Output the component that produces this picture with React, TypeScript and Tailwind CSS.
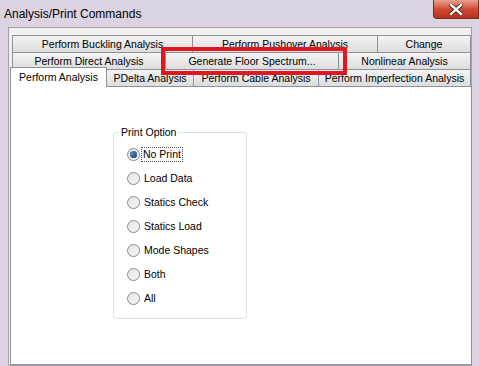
import React from "react";

const font = { fontFamily: '"Liberation Sans", Arial, sans-serif' };

function Tab({ label, w }: { label: string; w: string }) {
  return (
    <div
      className={`${w} h-[18px] shrink-0 flex items-center justify-center border border-[#8e9199] -ml-px first:ml-0 bg-gradient-to-b from-[#f4f4f4] to-[#dddddd] text-[10.5px] text-black leading-none whitespace-nowrap overflow-hidden`}
    >
      {label}
    </div>
  );
}

function Radio({ label, checked }: { label: string; checked?: boolean }) {
  return (
    <div className="h-[24px] flex items-center">
      <div className="w-[13px] h-[13px] rounded-full border border-[#8a8a8a] bg-gradient-to-br from-[#e4e4e4] to-[#f8f8f8] flex items-center justify-center shrink-0">
        {checked && (
          <div className="w-[7px] h-[7px] rounded-full bg-gradient-to-br from-[#6aa6dc] to-[#0d3f7a] shadow-[inset_0_0_1px_#002a60]" />
        )}
      </div>
      <span
        className={`ml-[2px] px-[1px] text-[10.5px] leading-[13px] text-black ${checked ? "outline outline-1 outline-dotted outline-[#555]" : "border border-transparent"}`}
      >
        {label}
      </span>
    </div>
  );
}

export default function App() {
  return (
    <div className="w-[479px] h-[366px] overflow-hidden bg-[#dcd3e2] flex flex-col" style={font}>
      {/* title bar */}
      <div className="h-[27px] shrink-0 flex items-start justify-between">
        <div className="pl-[4px] pt-[7px] text-[12px] leading-[14px] text-black">Analysis/Print Commands</div>
        <div className="w-[46px] h-[19px] rounded-bl-[4px] border border-t-0 border-[#7a2a22] bg-gradient-to-b from-[#e9a190] via-[#cf4a34] to-[#b8301c] flex items-center justify-center">
          <svg width="14" height="11" viewBox="0 0 14 11">
            <path d="M2 1 L12 10 M12 1 L2 10" stroke="#3d1510" strokeWidth="4" strokeLinecap="square" />
            <path d="M2 1 L12 10 M12 1 L2 10" stroke="#ffffff" strokeWidth="2.4" strokeLinecap="square" />
          </svg>
        </div>
      </div>

      {/* dialog body */}
      <div className="relative flex-1 ml-[8px] mr-[7px] border border-[#a3a1a8] bg-[#f0f0f0] pt-[7px] pl-[1px] flex flex-col">
        <div className="flex pl-[2px]">
          <Tab label="Perform Buckling Analysis" w="w-[181px]" />
          <Tab label="Perform Pushover Analysis" w="w-[186px]" />
          <Tab label="Change" w="w-[94px]" />
        </div>
        <div className="flex pl-[2px] -mt-px">
          <Tab label="Perform Direct Analysis" w="w-[154px]" />
          <Tab label="Generate Floor Spectrum..." w="w-[174px]" />
          <Tab label="Nonlinear Analysis" w="w-[133px]" />
        </div>
        <div className="flex items-end -mt-[3px] relative z-10">
          <div className="w-[97px] h-[20px] shrink-0 flex items-start justify-center pt-[4px] border border-b-0 border-[#8e9199] bg-white text-[10.5px] leading-none">
            Perform Analysis
          </div>
          <div className="flex -ml-px">
            <Tab label="PDelta Analysis" w="w-[88px]" />
            <Tab label="Perform Cable Analysis" w="w-[126px]" />
            <Tab label="Perform Imperfection Analysis" w="w-[153px]" />
          </div>
        </div>

        {/* page */}
        <div className="flex-1 -mt-px w-[462px] border border-[#8e9199] bg-white pl-[102px] pt-[45px]">
          <div className="relative w-[134px] h-[187px] border border-[#d5dfe5] rounded-[3px] pl-[13px] pt-[9px]">
            <span className="absolute -top-[7px] left-[5px] bg-white px-[2px] text-[10.5px] leading-[13px] text-black">
              Print Option
            </span>
            <div className="flex flex-col">
              <Radio label="No Print" checked />
              <Radio label="Load Data" />
              <Radio label="Statics Check" />
              <Radio label="Statics Load" />
              <Radio label="Mode Shapes" />
              <Radio label="Both" />
              <Radio label="All" />
            </div>
          </div>
        </div>

        {/* red annotation box */}
        <div className="absolute z-20 left-[152px] top-[19px] w-[186px] h-[28px] border-[4px] border-[#e1161f]" />
      </div>
    </div>
  );
}
